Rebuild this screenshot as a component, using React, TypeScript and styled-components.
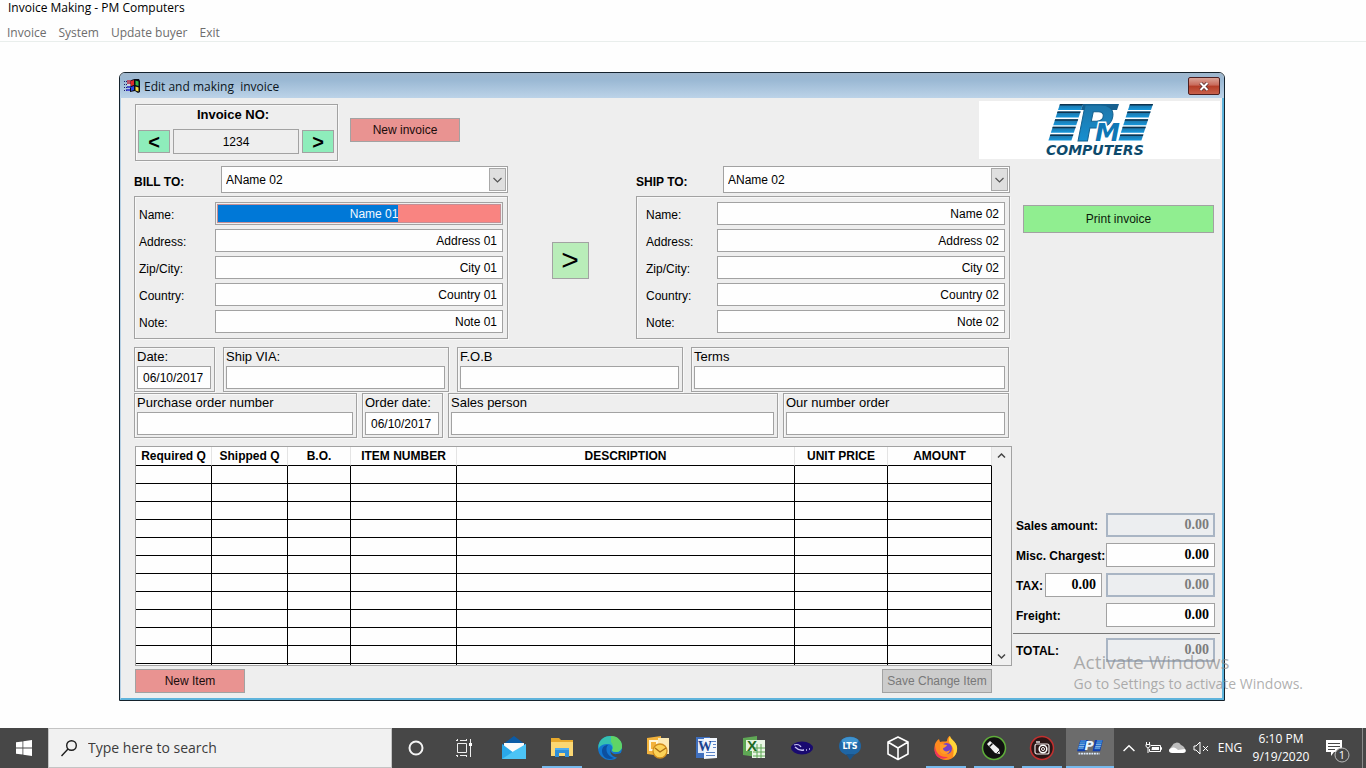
import React, { useId } from "react";
import styled, { createGlobalStyle, css } from "styled-components";

const ui = `"Open Sans", "Noto Sans", sans-serif`;
const form = `"Liberation Sans", Arial, sans-serif`;
const line = "#a2a2a2";
const face = "#eeeeee";

const GlobalStyle = createGlobalStyle`
  *, *::before, *::after { box-sizing: border-box; }
  body { margin: 0; background: #fefefe; color: #000; font-family: ${form}; font-size: 12px; }
  button, input, select { font: inherit; color: inherit; margin: 0; border-radius: 0; }
  button:focus, input:focus, select:focus { outline: 1px dotted #333; }
`;

const Screen = styled.div`
  position: relative;
  display: flex;
  flex-direction: column;
  min-height: 100vh;
`;

/* ---------- application frame ---------- */

const AppTitle = styled.h1`
  margin: 0;
  padding: 0 8px;
  font: 400 12px/16px ${ui};
`;

const MenuBar = styled.nav`
  display: flex;
  gap: 12px;
  padding: 8px 7px 0;
  height: 26px;
  border-bottom: 1px solid #e9eeec;
`;

const MenuItem = styled.button`
  padding: 0;
  border: 0;
  background: none;
  color: #6d6d6d;
  font: 400 12px/17px ${ui};
  height: 17px;
`;

const Workspace = styled.main`
  flex: 1;
  padding: 30px 141px 27px 119px;
`;

const Window = styled.section`
  border: 1px solid #14222c;
  border-radius: 6px 6px 0 0;
  overflow: hidden;
  background: ${face};
`;

const WindowTitle = styled.header`
  display: flex;
  align-items: center;
  height: 25px;
  padding: 0 4px;
  gap: 3px;
  background: linear-gradient(#a0b7cd, #9bb9d4 30%, #bcd3e8);
  h2 { flex: 1; margin: 0; padding-top: 3px; font: 400 12px/16px ${ui}; white-space: pre; color: #0b1520; }
`;

const CloseButton = styled.button`
  display: grid;
  place-items: center;
  width: 32px;
  height: 18px;
  margin-top: 1px;
  padding: 0;
  border: 1px solid #4d1f20;
  border-radius: 2px;
  background: linear-gradient(#dba397, #c9695a 45%, #b43c27 50%, #c8604a);
`;

const WindowBody = styled.div`
  padding: 3px 2px 5px 13px;
  border: solid #5fb4dc;
  border-width: 0 2px 2px 1px;
  border-left-color: #b4cfe4;
`;

const HeaderRow = styled.div`
  display: flex;
  align-items: flex-start;
  margin-bottom: 5px;
`;

const Columns = styled.div`
  display: flex;
  gap: 1px;
`;

const MainColumn = styled.div`
  flex: 1;
  min-width: 0;
`;

/* ---------- shared controls ---------- */

const Box = styled.div`
  border: 1px solid ${line};
  box-shadow: inset 1px 1px 0 #f8f8f8, 1px 1px 0 #f8f8f8;
`;

const Field = styled.input<{ $align?: string }>`
  display: block;
  width: 100%;
  min-width: 0;
  height: 23px;
  padding: 0 5px;
  border: 1px solid ${line};
  background: #fefefe;
  text-align: ${(p) => p.$align ?? "left"};
`;

const tones = {
  red: "#e99391",
  green: "#90ee90",
  grey: "#cccccc",
};

const ActionButton = styled.button<{ $tone: keyof typeof tones }>`
  width: 110px;
  height: 24px;
  padding: 0;
  border: 1px solid ${line};
  background: ${(p) => tones[p.$tone]};
  color: ${(p) => (p.$tone === "grey" ? "#787878" : "#1a0c0c")};
`;

/* ---------- invoice number ---------- */

const InvoiceBox = styled(Box)`
  width: 203px;
  height: 57px;
  margin: 3px 12px 0 1px;
  padding: 2px 3px 2px 2px;
  label { display: block; padding-right: 6px; text-align: center; font: 700 13px/15px ${form}; }
`;

const InvoiceNav = styled.div`
  display: flex;
  align-items: center;
  gap: 3px;
  padding-top: 7px;
`;

const NumberField = styled(Field)`
  flex: 1;
  height: 25px;
  background: ${face};
`;

const StepButton = styled.button`
  width: 32px;
  height: 23px;
  padding: 0;
  border: 1px solid ${line};
  background: #8eedbb;
  font: 700 20px/18px ${form};
`;

const NewInvoice = styled(ActionButton)`
  margin-top: 17px;
`;

const LogoPanel = styled.div`
  width: 241px;
  height: 58px;
  margin-left: auto;
  display: flex;
  justify-content: center;
  background: #fff;
`;

/* ---------- parties ---------- */

const Parties = styled.div`
  display: grid;
  grid-template-columns: minmax(0, 1fr) 128px minmax(0, 1fr);
  margin-right: 2px;
`;

const PartyHead = styled.div`
  display: flex;
  align-items: center;
  margin-bottom: 3px;
  label { width: 87px; padding-top: 4px; font-weight: 700; }
`;

const SelectWrap = styled.div`
  position: relative;
  flex: 1;
  select {
    display: block;
    appearance: none;
    width: 100%;
    height: 27px;
    padding: 0 24px 0 4px;
    border: 1px solid ${line};
    background: #fefefe;
  }
  svg {
    position: absolute;
    top: 2px;
    right: 2px;
    pointer-events: none;
    border: 1px solid #a8a8a8;
    background: #dfdfdf;
  }
`;

const PartyBox = styled(Box)`
  display: grid;
  gap: 4px;
  padding: 5px 4px;
`;

const PartyRow = styled.div<{ $indent: number }>`
  display: grid;
  grid-template-columns: ${(p) => 76 - p.$indent}px minmax(0, 1fr);
  align-items: center;
  padding-left: ${(p) => p.$indent}px;
  label { padding-top: 3px; }
`;

const ActiveField = styled.div`
  display: flex;
  height: 23px;
  padding: 1px;
  border: 1px solid ${line};
  > div { flex: 1; border: 1px solid #c58f95; background: #f98481; }
  input {
    display: block;
    width: 64%;
    height: 17px;
    padding: 0;
    border: 0;
    background: #0078d7;
    color: #f2f8ff;
    text-align: right;
  }
`;

const CopyButton = styled.button`
  place-self: center;
  width: 37px;
  height: 37px;
  margin: 15px 4px 0 0;
  padding: 0;
  border: 1px solid ${line};
  background: #b9edb9;
  font: 400 30px/30px ${form};
`;

/* ---------- detail fields ---------- */

const Details = styled.div`
  display: grid;
  gap: 1px;
  margin: 8px 3px 8px 0;
`;

const DetailRow = styled.div<{ $columns: string; $gap: number }>`
  display: grid;
  grid-template-columns: ${(p) => p.$columns};
  gap: ${(p) => p.$gap}px;
`;

const Detail = styled(Box)`
  padding: 0 3px 2px 2px;
  label { display: block; font-size: 13px; line-height: 18px; white-space: nowrap; }
  input { padding: 0 5px; }
`;

/* ---------- items table ---------- */

const ItemsFrame = styled.div`
  display: flex;
  height: 220px;
  margin-left: 1px;
  border: 1px solid ${line};
  background: #fefefe;
`;

const ItemsView = styled.div`
  flex: 1;
  min-width: 0;
  overflow: hidden;
`;

const Items = styled.table`
  width: 100%;
  table-layout: fixed;
  border-collapse: separate;
  border-spacing: 0;
  th, td { height: 18px; padding: 0; border: solid #000; border-width: 0 1px 1px 0; }
  th { height: 19px; border-right-color: #e4e4e4; font: 700 12px/18px ${form}; white-space: nowrap; }
`;

const Scroll = styled.div`
  width: 19px;
  display: flex;
  flex-direction: column;
  justify-content: space-between;
  background: #f0f0f0;
  button { display: grid; place-items: center; height: 17px; padding: 0; border: 0; background: none; }
`;

const TableActions = styled.div`
  display: flex;
  justify-content: space-between;
  margin: 3px 20px 0 1px;
`;

/* ---------- totals ---------- */

const Side = styled.aside`
  width: 207px;
  display: flex;
  flex-direction: column;
`;

const PrintButton = styled(ActionButton)`
  width: auto;
  height: 28px;
  margin: 39px 6px 0 10px;
  color: #0c1a0c;
`;

const Totals = styled.div`
  display: grid;
  grid-template-columns: minmax(0, 1fr);
  gap: 6px;
  margin-top: auto;
  padding: 0 5px 6px 3px;
`;

const GrandTotal = styled.div`
  margin-bottom: 31px;
  padding: 4px 5px 0 3px;
  border-top: 1px solid #777;
`;

const TotalRow = styled.div`
  display: flex;
  align-items: center;
  label { flex: 1; padding-top: 2px; font-weight: 700; white-space: nowrap; }
`;

const Amount = styled(Field)<{ $narrow?: boolean }>`
  flex: none;
  width: ${(p) => (p.$narrow ? 57 : 109)}px;
  height: 24px;
  margin-right: ${(p) => (p.$narrow ? 4 : 0)}px;
  text-align: right;
  font: 700 14px/20px "Liberation Serif", "Times New Roman", serif;
  ${(p) =>
    p.readOnly &&
    css`
      border: 2px solid #a9b5c4;
      padding-right: 4px;
      background: #eceef0;
      color: #7c7c7c;
    `}
`;

const Watermark = styled.div`
  position: absolute;
  right: 63px;
  bottom: 74px;
  color: rgba(140, 140, 140, 0.7);
  pointer-events: none;
  font: 400 14px/20px ${ui};
  white-space: nowrap;
  strong { display: block; font: 400 19px/24px ${ui}; }
`;

/* ---------- taskbar ---------- */

const Taskbar = styled.footer`
  display: flex;
  height: 40px;
  background: #474747;
  color: #fff;
  font-family: ${ui};
`;

const TaskGroup = styled.div`
  display: flex;
  margin-right: 2px;
`;

const TaskButton = styled.button<{ $open?: boolean; $active?: boolean }>`
  display: grid;
  place-items: center;
  width: 48px;
  padding: 0;
  border: 0;
  background: ${(p) => (p.$active ? "#6c6c6c" : "none")};
  background-image: ${(p) => (p.$open ? "linear-gradient(#76b9ed, #76b9ed)" : "none")};
  background-size: ${(p) => (p.$active ? "100%" : "40px")} 2px;
  background-position: center bottom;
  background-repeat: no-repeat;
`;

const Search = styled.label`
  display: flex;
  align-items: center;
  gap: 11px;
  width: 344px;
  padding: 0 12px;
  border: 1px solid #c4c4c4;
  background: #f1f1f1;
  input { flex: 1; min-width: 0; padding: 0; border: 0; background: none; font: 400 14px/20px ${ui}; }
  input::placeholder { color: #3c3c3c; opacity: 1; }
`;

const Tray = styled.div`
  display: flex;
  align-items: center;
  margin-left: auto;
  font-size: 12px;
`;

const TrayButton = styled.button<{ $w?: number }>`
  display: grid;
  place-items: center;
  width: ${(p) => p.$w ?? 24}px;
  height: 40px;
  padding: 0;
  border: 0;
  background: none;
  text-align: center;
  font-size: 12px;
  line-height: 18px;
`;

const ShowDesktop = styled.button`
  width: 4px;
  height: 40px;
  padding: 0;
  border: 0;
  border-left: 1px solid #8a8a8a;
  background: none;
`;

/* ---------- drawings ---------- */

const LogoSvg = styled.svg`
  overflow: visible;
`;

function LogoBars({ fill, shade }: { fill: string; shade: string }) {
  return (
    <>
      {[0, 1, 2, 3, 4].map((i) => {
        const y = 3 + i * 7.6;
        const x = 15 - i * 2.4;
        return [x, x + 70].map((s) => (
          <g key={`${i}-${s}`}>
            <path d={`M${s} ${y}h23l-2 6h-23z`} fill={fill} />
            <path d={`M${s} ${y}h23l-.5 1.500h-23z`} fill={shade} />
          </g>
        ));
      })}
    </>
  );
}

function PmLogo() {
  const id = useId();
  const fill = `url(#${id})`;
  return (
    <LogoSvg width="110" height="58" viewBox="0 0 110 58" aria-label="PM Computers">
      <defs>
        <linearGradient id={id} x1="0" y1="0" x2="0" y2="1">
          <stop offset="0" stopColor="#1f6f9f" />
          <stop offset="1" stopColor="#1597dc" />
        </linearGradient>
      </defs>
      <LogoBars fill={fill} shade="#0d3450" />
      <g fontFamily="DejaVu Sans, sans-serif" fontWeight="700" fontStyle="italic">
        <path d="M38 3h36l-2 6H36z" fill="#17608f" />
        <text x="32" y="40" fontSize="50" fill={fill} stroke="#14618f" strokeWidth="1">P</text>
        <text x="50" y="40" fontSize="25" fill="#0e77b5" stroke="#fff" strokeWidth="3" paintOrder="stroke">M</text>
        <text x="1" y="54" fontSize="14" fill="#0d4a6c">COMPUTERS</text>
      </g>
    </LogoSvg>
  );
}

function PmTaskIcon() {
  return (
    <LogoSvg width="26" height="16" viewBox="0 0 110 68" aria-hidden="true">
      <path d="M14 0h34L34 48H0zM76 0h34L98 48H66z" fill="#123fae" />
      <LogoBars fill="#2a7fd0" shade="#cfe6f7" />
      <text x="32" y="42" fontSize="54" fill="#e6f3ff" fontFamily="DejaVu Sans, sans-serif" fontWeight="700" fontStyle="italic">P</text>
      <path d="M6 58h90" stroke="#dfeeff" strokeWidth="7" strokeDasharray="8 3" />
    </LogoSvg>
  );
}

function FlagIcon() {
  return (
    <svg width="17" height="16" viewBox="0 0 17 16" aria-hidden="true">
      <path d="M6 3c3-2 5-2 5-2h4l1 2v11l-2 1-3-2-5 1z" fill="#0a0a12" />
      <path d="M0 3.500h3M0 6.500h3M0 9.500h3M0 12.500h3" stroke="#1c1c6c" strokeDasharray="1 1" />
      <path d="M3 3h4M3 5h4" stroke="#c03048" strokeWidth="1.400" />
      <path d="M3 9h4M2 12h4" stroke="#2a2ac8" strokeWidth="1.400" />
      <path d="M3 7h4" stroke="#eee" />
      <path d="M7 3l3-1v5l-3 1z" fill="#e02a2a" />
      <path d="M11.500 2.500l3 1v4.500l-3-1z" fill="#35b84b" />
      <path d="M7 9l3-1v4l-3 1z" fill="#2b48e0" />
      <path d="M11.500 8.500l3 1v4l-3-1z" fill="#f0d840" />
    </svg>
  );
}

const Chevron = ({ up, size = 9, color = "#444", weight = 1.5 }: { up?: boolean; size?: number; color?: string; weight?: number }) => (
  <svg width={size} height={size} viewBox="0 0 9 9" aria-hidden="true">
    <path d={up ? "M1 6.500L4.500 3 8 6.500" : "M1 2.500L4.500 6 8 2.500"} fill="none" stroke={color} strokeWidth={weight} />
  </svg>
);

const Icon = ({ children, size = 26 }: { children: React.ReactNode; size?: number }) => (
  <svg width={size} height={size} viewBox="0 0 26 26" fill="none" aria-hidden="true">
    {children}
  </svg>
);

type Task = { name: string; open?: boolean; active?: boolean; art: React.ReactNode };

const systemTasks: Task[] = [
  { name: "Cortana", art: <Icon><circle cx="13" cy="13" r="6.500" stroke="#f4f4f4" strokeWidth="2" /></Icon> },
  {
    name: "Task view",
    art: (
      <Icon>
        <path d="M6.500 8.500h9v9h-9zM5 5.500h2M9 5.500h6M5 20.500h2M9 20.500h6M6.500 4v2M15.500 4v2M6.500 20v2M15.500 20v2M19.500 4v18" stroke="#eee" />
        <path d="M18 8h3v3h-3z" fill="#fff" />
      </Icon>
    ),
  },
];

const appTasks: Task[] = [
  {
    name: "Mail",
    art: (
      <Icon>
        <path d="M1 10L13 1l12 9v5H1z" fill="#0b5ba6" />
        <path d="M3 8h20v10H3z" fill="#fafafa" />
        <path d="M1 9l12 9 12-9v15H1z" fill="#2aa8ea" />
        <path d="M1 24l12-8 12-7v15z" fill="#4cc4f6" />
      </Icon>
    ),
  },
  {
    name: "File Explorer",
    open: true,
    art: (
      <Icon>
        <path d="M2 3h8l2 2h12v16H2z" fill="#e8a92c" />
        <path d="M2 7h22v14H2z" fill="#fbd773" />
        <path d="M6 13h14v9h-4v-4h-6v4H6z" fill="#2f8fd8" />
        <path d="M6 13h14v2H6z" fill="#51aef0" />
      </Icon>
    ),
  },
  {
    name: "Edge",
    art: (
      <Icon>
        <circle cx="13" cy="13" r="12" fill="#1276cf" />
        <path d="M1.500 10C3 4 8 1 13 1c7 0 12 5 12 10 0 4-3 6-6 6-3 0-4-1-4-2 1-1 1-6-4-6-4 0-8 1-9.500 5z" fill="#35c1b0" />
        <path d="M14 1c7 0 11 5 11 10 0 4-3 6-6 6-3 0-4-1-4-2 2-2 1-6-1-8z" fill="#5fd466" />
        <path d="M11 10c-3 3-2 11 6 13-6 3-12-1-12-7 0-4 3-6 6-6z" fill="#0c4f9f" />
        <path d="M15 12c-3 3-1 8 5 7 2 0 4-1 5-2l2 1-3 5c-2 0-4 0-6-1-5-2-6-7-3-10z" fill="#474747" />
      </Icon>
    ),
  },
  {
    name: "Outlook",
    art: (
      <Icon>
        <path d="M2 3l14-2v20L2 19z" fill="#f3b33c" />
        <path d="M5 6h7v9H5z" stroke="#fff6d8" strokeWidth="2" />
        <path d="M13 3h11v16H13z" fill="#fbe9b4" />
        <circle cx="15" cy="16" r="7" fill="#fbd257" stroke="#d08d1c" strokeWidth="1.300" />
        <path d="M10 13l5 4 6-4" stroke="#a96c14" strokeWidth="1.300" />
      </Icon>
    ),
  },
  {
    name: "Word",
    art: (
      <Icon>
        <path d="M3 2h14v21H3z" fill="#3f6fbe" />
        <path d="M5 4h9v14H5z" fill="#dfe9f8" />
        <path d="M11 3h13v20l-13 1z" fill="#f3f7fd" />
        <path d="M13 17.500h9M13 20.500h9M19 6.500h4M20 9.500h3M20 12.500h3" stroke="#5a83c6" />
        <text x="5" y="16" fontSize="14" fontWeight="700" fill="#1d438f" fontFamily="Liberation Serif, serif">W</text>
      </Icon>
    ),
  },
  {
    name: "Excel",
    art: (
      <Icon>
        <path d="M2 3l14-2v21L2 20z" fill="#5fa855" />
        <path d="M5 5h9v11H5z" fill="#e4f3df" />
        <path d="M11 5h13v18H11z" fill="#eaf6e6" />
        <path d="M12 13h12M12 17h12M12 21h12M16 9v14M20 9v14" stroke="#5fa855" />
        <text x="6" y="16" fontSize="15" fontWeight="700" fill="#1f6a25" fontFamily="Liberation Sans, sans-serif">X</text>
      </Icon>
    ),
  },
  {
    name: "Network tool",
    art: (
      <Icon>
        <ellipse cx="13" cy="13" rx="11" ry="6.500" fill="#190a70" />
        <path d="M5 10c3-1 6 0 7 2M6 12c2 2 5 4 9 3M14 15h1M17 15h1M20 14h1" stroke="#c9c4f2" strokeWidth="1.300" />
      </Icon>
    ),
  },
  {
    name: "LTS",
    art: (
      <Icon>
        <ellipse cx="13" cy="11" rx="11" ry="9.500" fill="#1f66a5" />
        <path d="M9 19l4 6 5-6z" fill="#1a5388" />
        <ellipse cx="13" cy="6" rx="8.500" ry="4" fill="#3f93cf" />
        <text x="13" y="14" textAnchor="middle" fontSize="8" fontWeight="700" fill="#fff" fontFamily="DejaVu Sans, sans-serif">LTS</text>
      </Icon>
    ),
  },
  {
    name: "3D Viewer",
    art: (
      <Icon>
        <path d="M13 2l10 5v12l-10 5.500L3 19V7zM3 7l10 6 10-6M13 13v11.500" stroke="#fff" strokeWidth="1.600" strokeLinejoin="round" />
      </Icon>
    ),
  },
  {
    name: "Firefox",
    open: true,
    art: (
      <Icon>
        <path d="M2 9c1-2 2-4 4-5l1 3c3-1 6 0 7-1 0-3 2-5 3-5 0 3 6 5 7 11 1 7-4 13-11 13S1 19 1.500 13z" fill="#ff8a1e" />
        <path d="M17 1c0 3 6 5 7 11 .500 4-1 8-4 10 1-5 1-9-2-12-2-2-3-5-1-9z" fill="#ffd53a" />
        <path d="M2 9c0 8 4 14 13 13-4 3-11 2-13-4-1-3 0-7 0-9z" fill="#f0355b" />
        <circle cx="13.500" cy="13.500" r="5.500" fill="#7442c8" />
        <path d="M7 9c3-1 4 1 7 1-1 3-4 2-4 4 1 3 5 3 7 1-1 5-8 6-10 1z" fill="#ff9a28" />
      </Icon>
    ),
  },
  {
    name: "CorelDRAW",
    open: true,
    art: (
      <Icon>
        <circle cx="13" cy="13" r="11.500" fill="#111" stroke="#5fae3a" strokeWidth="1.500" />
        <path d="M6 9l3-3 9 8 1 5-5-1z" fill="#f2f2f2" />
        <path d="M8.500 11.500l3-3" stroke="#111" strokeWidth="1.500" />
        <path d="M16 18l3-3" stroke="#222" />
      </Icon>
    ),
  },
  {
    name: "Photo capture",
    open: true,
    art: (
      <Icon>
        <circle cx="13" cy="13" r="11.500" fill="#2b1717" stroke="#c2302f" strokeWidth="1.500" />
        <rect x="6" y="9" width="14" height="10" rx="2" stroke="#e9e2e2" strokeWidth="1.200" />
        <path d="M7 7h4" stroke="#e9e2e2" strokeWidth="1.500" />
        <circle cx="14" cy="14" r="3.800" fill="#2b1717" stroke="#fff" strokeWidth="1.500" />
        <circle cx="14" cy="14" r="1.500" stroke="#fff" />
      </Icon>
    ),
  },
  { name: "Invoice Making", open: true, active: true, art: <PmTaskIcon /> },
];

const TaskItem = ({ task }: { task: Task }) => (
  <TaskButton aria-label={task.name} $open={task.open} $active={task.active}>
    {task.art}
  </TaskButton>
);

/* ---------- data ---------- */

const partyFields = (n: string): [string, string][] => [
  ["Name:", `Name ${n}`],
  ["Address:", `Address ${n}`],
  ["Zip/City:", `City ${n}`],
  ["Country:", `Country ${n}`],
  ["Note:", `Note ${n}`],
];

const itemColumns: [string, number | undefined][] = [
  ["Required Q", 76],
  ["Shipped Q", 76],
  ["B.O.", 63],
  ["ITEM NUMBER", 106],
  ["DESCRIPTION", undefined],
  ["UNIT PRICE", 93],
  ["AMOUNT", 104],
];

function Party({ id, title, number, indent, active }: { id: string; title: string; number: string; indent: number; active?: boolean }) {
  return (
    <div>
      <PartyHead>
        <label htmlFor={id}>{title}</label>
        <SelectWrap>
          <select id={id}>
            <option>AName 02</option>
          </select>
          <svg width="17" height="23" viewBox="0 0 15 21" aria-hidden="true">
            <path d="M3.500 9l4 4 4-4" fill="none" stroke="#555" strokeWidth="1.200" />
          </svg>
        </SelectWrap>
      </PartyHead>
      <PartyBox>
        {partyFields(number).map(([label, value], i) => (
          <PartyRow key={label} $indent={indent}>
            <label htmlFor={`${id}-${i}`}>{label}</label>
            {active && i === 0 ? (
              <ActiveField>
                <div><input id={`${id}-${i}`} defaultValue={value} /></div>
              </ActiveField>
            ) : (
              <Field id={`${id}-${i}`} defaultValue={value} $align="right" />
            )}
          </PartyRow>
        ))}
      </PartyBox>
    </div>
  );
}

function DetailField({ id, label, value }: { id: string; label: string; value?: string }) {
  return (
    <Detail>
      <label htmlFor={id}>{label}</label>
      <Field id={id} defaultValue={value} />
    </Detail>
  );
}

export default function App() {
  return (
    <Screen>
      <GlobalStyle />
      <AppTitle>Invoice Making - PM Computers</AppTitle>
      <MenuBar>
        {["Invoice", "System", "Update buyer", "Exit"].map((m) => (
          <MenuItem key={m}>{m}</MenuItem>
        ))}
      </MenuBar>

      <Workspace>
        <Window>
          <WindowTitle>
            <FlagIcon />
            <h2>{"Edit and making  invoice"}</h2>
            <CloseButton aria-label="Close">
              <svg width="12" height="9" viewBox="0 0 12 9" aria-hidden="true">
                <path d="M2.500 1l7 7M9.500 1l-7 7" stroke="#5a3030" strokeWidth="3.600" />
                <path d="M2.500 1l7 7M9.500 1l-7 7" stroke="#fff" strokeWidth="2" />
              </svg>
            </CloseButton>
          </WindowTitle>
          <WindowBody>
            <HeaderRow>
              <InvoiceBox>
                <label htmlFor="invoice-no">Invoice NO:</label>
                <InvoiceNav>
                  <StepButton aria-label="Previous invoice">&lt;</StepButton>
                  <NumberField id="invoice-no" defaultValue="1234" $align="center" />
                  <StepButton aria-label="Next invoice">&gt;</StepButton>
                </InvoiceNav>
              </InvoiceBox>
              <NewInvoice $tone="red">New invoice</NewInvoice>
              <LogoPanel>
                <PmLogo />
              </LogoPanel>
            </HeaderRow>

            <Columns>
              <MainColumn>
                <Parties>
                  <Party id="bill" title="BILL TO:" number="01" indent={0} active />
                  <CopyButton aria-label="Copy billing to shipping">&gt;</CopyButton>
                  <Party id="ship" title="SHIP TO:" number="02" indent={5} />
                </Parties>

                <Details>
                  <DetailRow $columns="81px 226fr 226fr 318fr" $gap={8}>
                    <DetailField id="date" label="Date:" value="06/10/2017" />
                    <DetailField id="via" label="Ship VIA:" />
                    <DetailField id="fob" label="F.O.B" />
                    <DetailField id="terms" label="Terms" />
                  </DetailRow>
                  <DetailRow $columns="223fr 81px 330fr 226fr" $gap={5}>
                    <DetailField id="po" label="Purchase order number" />
                    <DetailField id="order-date" label="Order date:" value="06/10/2017" />
                    <DetailField id="sales" label="Sales person" />
                    <DetailField id="our" label="Our number order" />
                  </DetailRow>
                </Details>

                <ItemsFrame>
                  <ItemsView>
                    <Items>
                      <colgroup>
                        {itemColumns.map(([name, width]) => (
                          <col key={name} width={width} />
                        ))}
                      </colgroup>
                      <thead>
                        <tr>
                          {itemColumns.map(([name]) => (
                            <th key={name} scope="col">{name}</th>
                          ))}
                        </tr>
                      </thead>
                      <tbody>
                        {Array.from({ length: 12 }, (_, r) => (
                          <tr key={r}>
                            {itemColumns.map(([name]) => (
                              <td key={name} />
                            ))}
                          </tr>
                        ))}
                      </tbody>
                    </Items>
                  </ItemsView>
                  <Scroll>
                    <button aria-label="Scroll up"><Chevron up /></button>
                    <button aria-label="Scroll down"><Chevron /></button>
                  </Scroll>
                </ItemsFrame>

                <TableActions>
                  <ActionButton $tone="red">New Item</ActionButton>
                  <ActionButton $tone="grey">Save Change Item</ActionButton>
                </TableActions>
              </MainColumn>

              <Side>
                <PrintButton $tone="green">Print invoice</PrintButton>
                <Totals>
                  <TotalRow>
                    <label htmlFor="sales-amount">Sales amount:</label>
                    <Amount id="sales-amount" defaultValue="0.00" readOnly />
                  </TotalRow>
                  <TotalRow>
                    <label htmlFor="misc">Misc. Chargest:</label>
                    <Amount id="misc" defaultValue="0.00" />
                  </TotalRow>
                  <TotalRow>
                    <label htmlFor="tax">TAX:</label>
                    <Amount id="tax" defaultValue="0.00" $narrow />
                    <Amount aria-label="Tax amount" defaultValue="0.00" readOnly />
                  </TotalRow>
                  <TotalRow>
                    <label htmlFor="freight">Freight:</label>
                    <Amount id="freight" defaultValue="0.00" />
                  </TotalRow>
                </Totals>
                <GrandTotal>
                  <TotalRow>
                    <label htmlFor="total">TOTAL:</label>
                    <Amount id="total" defaultValue="0.00" readOnly />
                  </TotalRow>
                </GrandTotal>
              </Side>
            </Columns>
          </WindowBody>
        </Window>
      </Workspace>

      <Watermark>
        <strong>Activate Windows</strong>
        Go to Settings to activate Windows.
      </Watermark>

      <Taskbar>
        <TaskButton aria-label="Start">
          <svg width="16" height="16" viewBox="0 0 16 16" fill="#fff" aria-hidden="true">
            <path d="M0 2.300L6.500 1.400v6.200H0zM7.300 1.200L16 0v7.600H7.300zM0 8.400h6.500v6.200L0 13.700zM7.300 8.400H16V16l-8.700-1.200z" />
          </svg>
        </TaskButton>
        <Search>
          <svg width="16" height="17" viewBox="0 0 16 17" fill="none" stroke="#1c1c1c" strokeWidth="1.400" aria-hidden="true">
            <circle cx="10.500" cy="5.500" r="4.800" />
            <path d="M7 9L.500 16" />
          </svg>
          <input aria-label="Search" placeholder="Type here to search" />
        </Search>
        <TaskGroup>
          {systemTasks.map((t) => (
            <TaskItem key={t.name} task={t} />
          ))}
        </TaskGroup>
        {appTasks.map((t) => (
          <TaskItem key={t.name} task={t} />
        ))}
        <Tray>
          <TrayButton aria-label="Show hidden icons"><Chevron up size={14} color="#fff" weight={0.9} /></TrayButton>
          <TrayButton aria-label="Battery">
            <svg width="17" height="14" viewBox="0 0 17 14" fill="none" stroke="#fff" aria-hidden="true">
              <path d="M6 4.500h9.500v6H4.500V8M15.500 6.500h1v2h-1M1.500 1v2M4.500 1v2M1 3.500h4v2l-2 1.500-2-1.500zM3 7v5" />
              <path d="M7 6h7v3H6.500z" fill="#fff" stroke="none" />
            </svg>
          </TrayButton>
          <TrayButton aria-label="OneDrive">
            <svg width="18" height="12" viewBox="0 0 18 12" aria-hidden="true">
              <path d="M4 10a3.500 3.500 0 0 1 0-6 5 5 0 0 1 9-1c3 1 4 3 4 5z" fill="#bdbdbd" />
              <path d="M4 11c-4 0-4-5 0-5 2-1 4 0 6 2l7-1c2 2 0 4-2 4z" fill="#fff" />
            </svg>
          </TrayButton>
          <TrayButton aria-label="Volume muted">
            <svg width="16" height="14" viewBox="0 0 16 14" fill="none" stroke="#fff" aria-hidden="true">
              <path d="M1 5h2l4-4v12L3 9H1zM10 5l5 5M15 5l-5 5" />
            </svg>
          </TrayButton>
          <TrayButton $w={34}>ENG</TrayButton>
          <TrayButton $w={68}>
            <span>6:10 PM<br />9/19/2020</span>
          </TrayButton>
          <TrayButton $w={47} aria-label="Notifications, 1 new">
            <svg width="26" height="30" viewBox="0 0 26 30" aria-hidden="true">
              <path d="M0 7h16v12H8l-3 4v-4H0z" fill="#fff" />
              <path d="M2 10.500h12M2 13.500h12M2 16.500h7" stroke="#474747" />
              <circle cx="16" cy="22" r="7" fill="#474747" stroke="#bbb" />
              <text x="16" y="26" textAnchor="middle" fontSize="11" fill="#fff" fontFamily="Open Sans, sans-serif">1</text>
            </svg>
          </TrayButton>
          <ShowDesktop aria-label="Show desktop" />
        </Tray>
      </Taskbar>
    </Screen>
  );
}
